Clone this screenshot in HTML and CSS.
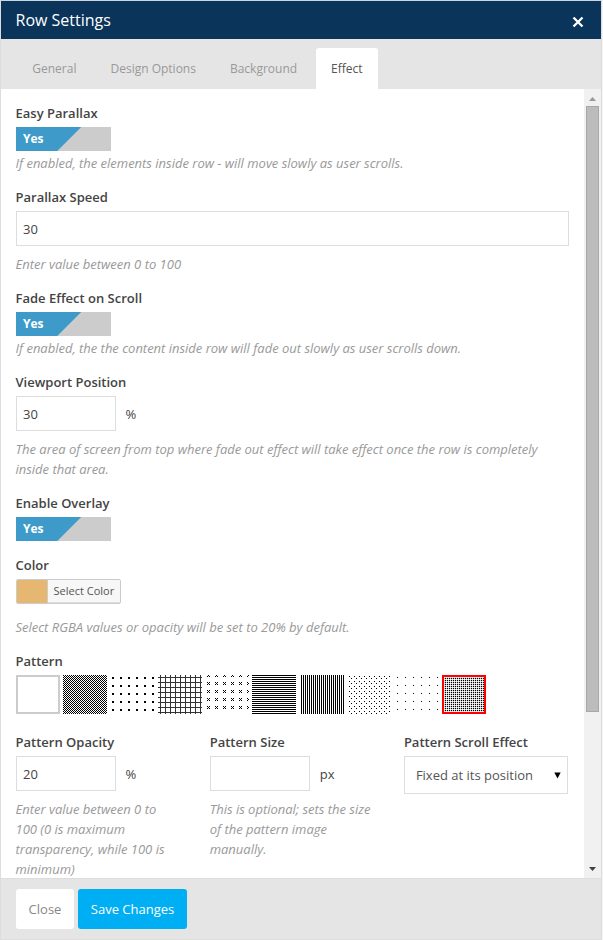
FILE: index.html
```html
<!DOCTYPE html>
<html lang="en">
<head>
<meta charset="utf-8">
<title>Row Settings</title>
<link rel="stylesheet" href="styles.css">
</head>
<body>
<div class="modal">
  <header class="header">
    <h1 class="title">Row Settings</h1>
    <svg class="close-icon" width="12" height="12" viewBox="0 0 12 12"><path d="M1.5 1.5L10.5 10.5M10.5 1.5L1.5 10.5"/></svg>
  </header>
  <nav class="tabs">
    <a class="tab">General</a>
    <a class="tab">Design Options</a>
    <a class="tab">Background</a>
    <a class="tab tab-active">Effect</a>
  </nav>
  <div class="body">
    <main class="content">
      <section class="field">
        <div class="label">Easy Parallax</div>
        <div class="toggle">Yes</div>
        <p class="hint hint-tight">If enabled, the elements inside row - will move slowly as user scrolls.</p>
      </section>
      <section class="field">
        <div class="label">Parallax Speed</div>
        <div class="input input-full">30</div>
        <p class="hint">Enter value between 0 to 100</p>
      </section>
      <section class="field">
        <div class="label">Fade Effect on Scroll</div>
        <div class="toggle">Yes</div>
        <p class="hint hint-tight">If enabled, the the content inside row will fade out slowly as user scrolls down.</p>
      </section>
      <section class="field">
        <div class="label">Viewport Position</div>
        <div class="input-row"><div class="input">30</div><span>%</span></div>
        <p class="hint">The area of screen from top where fade out effect will take effect once the row is completely inside that area.</p>
      </section>
      <section class="field">
        <div class="label">Enable Overlay</div>
        <div class="toggle">Yes</div>
      </section>
      <section class="field">
        <div class="label">Color</div>
        <div class="color-button"><span class="color-chip"></span><span class="color-text">Select Color</span></div>
        <p class="hint hint-color">Select RGBA values or opacity will be set to 20% by default.</p>
      </section>
      <section class="field field-pattern">
        <div class="label">Pattern</div>
        <div class="swatches">
          <div class="swatch swatch-none"></div>
          <svg class="swatch"><defs><pattern id="checker" width="2" height="2" patternUnits="userSpaceOnUse"><path d="M0 0h1v1H0zM1 1h1v1H1z"/></pattern></defs><rect width="44" height="39" fill="url(#checker)"/></svg>
          <svg class="swatch"><defs><pattern id="dots" width="8" height="8" patternUnits="userSpaceOnUse"><path d="M2 2h2v2H2z"/></pattern></defs><rect width="44" height="39" fill="url(#dots)"/></svg>
          <svg class="swatch"><defs><pattern id="grid" width="5" height="5" patternUnits="userSpaceOnUse"><path fill="#333" d="M2 0h1v5H2zM0 2h5v1H0z"/></pattern></defs><rect width="44" height="39" fill="url(#grid)"/></svg>
          <svg class="swatch"><defs><pattern id="crosses" y="-1" width="8" height="8" patternUnits="userSpaceOnUse"><path d="M2 0h1v1H2zM4 0h1v1H4zM3 1h1v1H3zM2 2h1v1H2zM4 2h1v1H4z"/></pattern></defs><rect width="44" height="39" fill="url(#crosses)"/></svg>
          <svg class="swatch"><defs><pattern id="rows" width="2" height="2" patternUnits="userSpaceOnUse"><path d="M0 0h2v1H0z"/></pattern></defs><rect width="44" height="39" fill="url(#rows)"/></svg>
          <svg class="swatch"><defs><pattern id="cols" width="2" height="2" patternUnits="userSpaceOnUse"><path d="M1 0h1v2H1z"/></pattern></defs><rect width="44" height="39" fill="url(#cols)"/></svg>
          <svg class="swatch"><defs><pattern id="stagger" width="5" height="5" patternUnits="userSpaceOnUse"><path d="M2 1h1v1H2zM4 3h1v1H4z"/></pattern></defs><rect width="44" height="39" fill="url(#stagger)"/></svg>
          <svg class="swatch"><defs><pattern id="sparse" width="8" height="8" patternUnits="userSpaceOnUse"><path d="M2 2h1v1H2z"/></pattern></defs><rect width="44" height="39" fill="url(#sparse)"/></svg>
          <svg class="swatch swatch-selected"><defs><pattern id="mesh" width="2" height="2" patternUnits="userSpaceOnUse"><path fill="#ccc" d="M0 0h2v2H0z"/><path fill="#fff" d="M0 0h1v1H0z"/><path d="M1 1h1v1H1z"/></pattern></defs><rect width="44" height="39" fill="url(#mesh)"/></svg>
        </div>
      </section>
      <div class="columns">
        <section>
          <div class="label">Pattern Opacity</div>
          <div class="input-row"><div class="input">20</div><span>%</span></div>
          <p class="hint">Enter value between 0 to 100 (0 is maximum transparency, while 100 is minimum)</p>
        </section>
        <section>
          <div class="label">Pattern Size</div>
          <div class="input-row"><div class="input"></div><span>px</span></div>
          <p class="hint">This is optional; sets the size of the pattern image manually.</p>
        </section>
        <section>
          <div class="label">Pattern Scroll Effect</div>
          <div class="select">Fixed at its position<svg width="7" height="7" viewBox="0 0 7 7"><path d="M0.3 0.5H6.7L3.5 6.5z"/></svg></div>
        </section>
      </div>
    </main>
    <div class="scrollbar">
      <svg class="arrow arrow-up" width="7" height="4" viewBox="0 0 7 4"><path d="M0 4L3.5 0L7 4z"/></svg>
      <div class="thumb"></div>
      <svg class="arrow" width="7" height="4" viewBox="0 0 7 4"><path d="M0 0H7L3.5 4z"/></svg>
    </div>
  </div>
  <footer class="footer">
    <div class="button">Close</div>
    <div class="button button-primary">Save Changes</div>
  </footer>
</div>
</body>
</html>
```
FILE: styles.css
```css
* { box-sizing: border-box; }
body {
  margin: 0;
  background: #f3f3f3;
  font: 13px/20px "Open Sans", sans-serif;
  color: #444;
}
.modal {
  width: 602px;
  height: 940px;
  border: 1px solid #ddd;
  border-top-color: #cbd5df;
  display: flex;
  flex-direction: column;
  background: #fff;
}
.header {
  height: 38px;
  flex: none;
  display: flex;
  align-items: center;
  justify-content: space-between;
  padding: 0 17px 0 14.5px;
  background: #0a3459;
}
.title {
  margin: 0;
  font-size: 16px;
  font-weight: 400;
  color: #fff;
}
.close-icon {
  margin-top: 4px;
  fill: none;
  stroke: #fff;
  stroke-width: 2.3;
}
.tabs {
  height: 50px;
  flex: none;
  display: flex;
  align-items: flex-end;
  gap: 3px;
  padding-left: 15.8px;
  background: #e5e5e5;
}
.tab {
  height: 41px;
  padding: 11px 15.5px 0;
  font-size: 12px;
  line-height: 20px;
  color: #999;
}
.tab-active {
  background: #fff;
  color: #555;
  border-radius: 3px 3px 0 0;
}
.body {
  height: 789px;
  flex: none;
  display: flex;
  overflow: hidden;
}
.content {
  flex: 1;
  padding: 14px 15px 0;
}
.field { margin-bottom: 14px; }
.field-pattern { margin-bottom: 18px; }
.label {
  font-weight: 600;
  margin: 0 0 4px -0.5px;
  white-space: nowrap;
}
.hint {
  margin: 8px 0 0 -0.5px;
  font-style: italic;
  letter-spacing: -0.01px;
  color: #999;
}
.hint-tight { margin-top: 2px; }
.hint-color { margin-top: 13px; }
.toggle {
  width: 95px;
  height: 24px;
  padding-left: 7px;
  font-size: 12px;
  line-height: 24px;
  font-weight: 700;
  color: #fff;
  background: linear-gradient(135deg, #3e9bc9 45.7px, #ccc 46.7px);
}
.input {
  width: 100px;
  height: 35px;
  padding: 0 6px;
  line-height: 34px;
  border: 1px solid #ddd;
}
.input-full { width: 553px; }
.input-row {
  display: flex;
  align-items: center;
  gap: 9.5px;
}
.color-button {
  width: 105px;
  height: 25px;
  display: flex;
  border: 1px solid #ccc;
  border-radius: 2px;
  background: #f7f7f7;
  box-shadow: inset 0 -1px 0 #ddd;
  overflow: hidden;
}
.color-chip {
  width: 30px;
  background: #e6b770;
}
.color-text {
  border-left: 1px solid #ccc;
  padding-left: 5.5px;
  font-size: 11px;
  line-height: 22px;
  color: #555;
}
.swatches {
  display: grid;
  grid-template-columns: 47px 47px 48px 47px 47px 48px 47px 48px 47px 44px;
}
.swatch {
  display: block;
  width: 44px;
  height: 39px;
  shape-rendering: crispEdges;
}
.swatch-none { border: 2px solid #ccc; }
.swatch-selected { border: 2px solid #f00; }
.columns {
  display: grid;
  grid-template-columns: 164px 164px 164px;
  column-gap: 30.2px;
}
.select {
  height: 38px;
  padding: 0 6px 0 10.5px;
  display: flex;
  align-items: center;
  justify-content: space-between;
  border: 1px solid #ddd;
  color: #555;
}
.scrollbar {
  width: 17px;
  display: flex;
  flex-direction: column;
  align-items: center;
  padding: 8px 0 7px;
  background: #f1f1f1;
}
.thumb {
  width: 13px;
  height: 606px;
  margin: 5px 0 auto;
  background: #bcbcbc;
  border: 1px solid #a8a8a8;
}
.arrow { fill: #404040; }
.arrow-up { fill: #999; }
.footer {
  flex: 1;
  display: flex;
  gap: 4px;
  padding: 10px 15px 0;
  border-top: 1px solid #ddd;
  background: #e5e5e5;
}
.button {
  width: 58px;
  height: 40px;
  line-height: 40px;
  text-align: center;
  border-radius: 3px;
  background: #fff;
  color: #888;
}
.button-primary {
  width: 109px;
  background: #00aef4;
  color: #fff;
}
```
